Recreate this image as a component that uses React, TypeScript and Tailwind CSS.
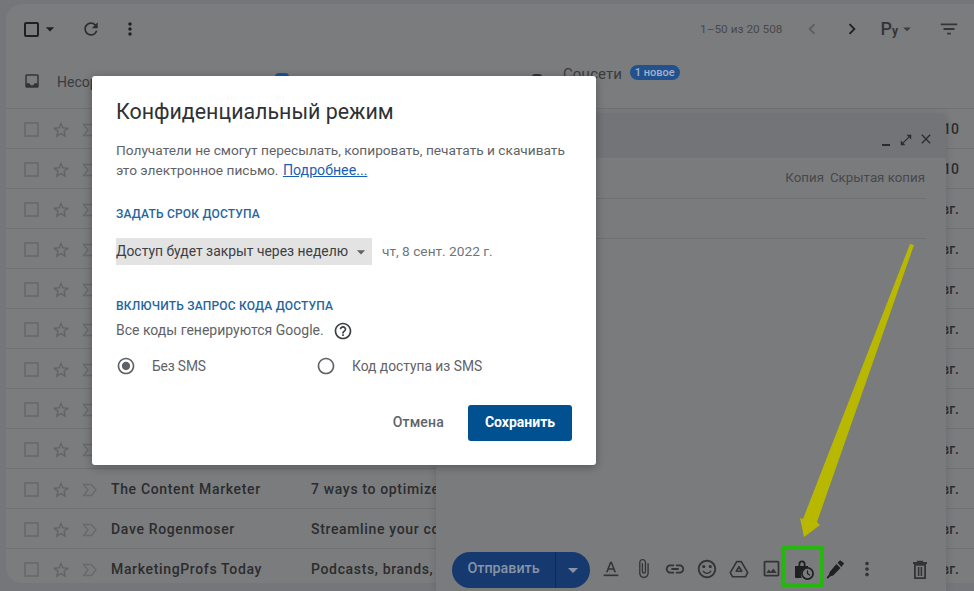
import {
  MdArrowDropDown,
  MdAttachFile,
  MdChevronLeft,
  MdChevronRight,
  MdClose,
  MdFilterList,
  MdHelpOutline,
  MdInbox,
  MdLink,
  MdMoreVert,
  MdOpenInFull,
  MdOutlineImage,
  MdOutlineStarBorder,
  MdRadioButtonChecked,
  MdRadioButtonUnchecked,
  MdRefresh,
  MdSentimentSatisfiedAlt,
} from 'react-icons/md'
import type { ReactNode } from 'react'

const rows = [
  { date: '10' },
  { date: '10' },
  { date: 'вг.' },
  { date: 'вг.' },
  { date: 'вг.' },
  { date: 'вг.' },
  { date: 'вг.' },
  { date: 'вг.' },
  { date: 'вг.' },
  { sender: 'The Content Marketer', subject: '7 ways to optimize your content', date: 'вг.' },
  { sender: 'Dave Rogenmoser', subject: 'Streamline your content', date: 'вг.' },
  { sender: 'MarketingProfs Today', subject: 'Podcasts, brands, and more', date: 'вг.' },
]

function ImportanceIcon() {
  return (
    <svg viewBox="0 0 16 14" className="h-[14px] w-[16px] shrink-0" fill="none" stroke="#68696b" strokeWidth="1.3">
      <path d="M1.5 1.5h8L14 7l-4.500 5.500h-8L6 7z" />
    </svg>
  )
}

function Row({ sender, subject, date }: { sender?: string; subject?: string; date: string }) {
  return (
    <div className="flex h-10 shrink-0 items-center border-t border-[#6f7072] pl-[18px] pr-[15px] pt-[2px] text-[14px] font-medium text-[#2b2c2e]">
      <div className="size-[15px] shrink-0 rounded-[1px] border-2 border-[#6b6c6e]" />
      <MdOutlineStarBorder className="ml-[12px] size-[20px] shrink-0 text-[#626365]" />
      <div className="ml-[11px]"><ImportanceIcon /></div>
      <div className="ml-[13px] w-[200px] shrink-0 truncate tracking-[0.65px]">{sender}</div>
      <div className="w-[125px] shrink-0 overflow-hidden whitespace-nowrap tracking-[0.65px]">{subject}</div>
      <div className="ml-auto shrink-0">{date}</div>
    </div>
  )
}

function LockClock() {
  return (
    <svg viewBox="0 0 24 24" className="size-[24px] text-[#1f2022]" fill="currentColor">
      <path d="M7.500 8V6a3.500 3.500 0 0 1 7 0v2h-1.800V6a1.700 1.700 0 0 0-3.400 0v2z" />
      <path d="M4 8h13v1.600A7 7 0 0 0 10.800 20H5a1 1 0 0 1-1-1z" />
      <circle cx="16.500" cy="15.500" r="5.600" fill="none" stroke="currentColor" strokeWidth="1.700" />
      <path d="M15.900 12.300h1.200v3l2.300 1.400-.6 1-2.900-1.700z" />
    </svg>
  )
}

function DriveIcon() {
  return (
    <svg viewBox="0 0 24 24" className="size-[22px]" fill="none" stroke="#333436" strokeWidth="1.800" strokeLinejoin="round">
      <path d="M9.500 4h5l7 12-2.500 4.500H5L2.500 16z" />
      <path d="M12 9.500l3 5H9z" />
    </svg>
  )
}

function PenIcon() {
  return (
    <svg viewBox="0 0 24 24" className="size-[22px]" fill="#1f2022">
      <path d="M13.500 6.500l4.500 4.500-8 8-3 .8L4 22.500l-1.200-1.200 2.600-2.900.8-3.100z" />
      <path d="M14.800 5.200l2.700-2.700 4.500 3.200-3 4.200z" />
    </svg>
  )
}

function TextColorIcon() {
  return (
    <svg viewBox="0 0 24 24" className="size-[22px]" fill="#333436">
      <path d="M11 4h2l4.500 11.500h-1.900l-1-2.800H9.400l-1 2.800H6.500zm-1 7.100h4L12 5.900z" />
      <rect x="4" y="18" width="16" height="1.800" />
    </svg>
  )
}

function TrashIcon() {
  return (
    <svg viewBox="0 0 24 24" className="size-[24px]" fill="#333436">
      <path d="M5 4h14v2H5zM9 2.800h6V4H9z" />
      <path d="M6 6h12v15H6zm1.800 1.800v11.400h8.400V7.800z" />
      <rect x="9.800" y="9" width="1.600" height="9" />
      <rect x="12.600" y="9" width="1.600" height="9" />
    </svg>
  )
}

function Slot({ children }: { children: ReactNode }) {
  return <div className="flex w-[32px] shrink-0 justify-center">{children}</div>
}

export default function App() {
  return (
    <div className="relative h-[591px] w-[974px] overflow-hidden bg-[#75767a] font-['Roboto',sans-serif]">
      {/* inbox behind the dim layer */}
      <div className="ml-[6px] mt-[4px] flex h-[579px] w-[968px] flex-col overflow-hidden rounded-tl-2xl rounded-bl-2xl bg-[#7b7c7e]">
        <div className="flex h-[50px] shrink-0 items-center pl-[18px] pr-[14px]">
          <div className="size-[15px] rounded-[2px] border-2 border-[#1f2022]" />
          <MdArrowDropDown className="ml-[1px] size-[20px] text-[#1f2022]" />
          <MdRefresh className="ml-[21px] size-[20px] text-[#2b2c2e]" />
          <MdMoreVert className="ml-[19px] size-[20px] text-[#1f2022]" />
          <div className="ml-auto pt-[1px] text-[11.8px] text-[#48494b]">1–50 из 20 508</div>
          <MdChevronLeft className="ml-[19px] size-[22px] text-[#5c5d5f]" />
          <MdChevronRight className="ml-[18px] size-[22px] text-[#1f2022]" />
          <div className="ml-[17px] text-[18px] font-medium leading-none text-[#333436]">
            Р<span className="text-[12px] font-bold">у</span>
          </div>
          <MdArrowDropDown className="size-[18px] text-[#3b3c3e]" />
          <MdFilterList className="ml-[22px] size-[22px] text-[#333436]" />
        </div>
        <div className="flex h-[54px] shrink-0 pl-[17px] text-[14px] text-[#3a3b3d]">
          <MdInbox className="mt-[18px] size-[18px] text-[#333436]" />
          <div className="ml-[16px] mt-[18px] w-[218px]">Несортированные</div>
          <div className="mt-[19px] size-[14px] rounded-sm bg-[#1d4f9c]" />
          <div className="ml-[243px] mt-[20px] h-[6px] w-[10px] rounded-sm bg-[#333436]" />
          <div className="ml-[21px] mt-[9px] text-[15px]">Соцсети</div>
          <div className="ml-[8px] mt-[11px] h-[15px] rounded-full bg-[#22518f] px-[5px] text-[11px] font-medium leading-[15px] text-[#a6b2c6]">1 новое</div>
        </div>
        {rows.map((row, i) => (
          <Row key={i} sender={row.sender} subject={row.subject} date={row.date} />
        ))}
      </div>

      {/* compose window */}
      <div className="absolute left-[436px] top-[115px] flex h-[476px] w-[510px] flex-col bg-[#7a7b7d] shadow-[0_0_8px_rgba(0,0,0,0.15)]">
        <div className="flex h-[43px] shrink-0 items-end justify-end gap-[2px] bg-[#737478] pb-[11px] pr-[12px] text-[#2b2c2e]">
          <div className="mb-[1px] mr-[7px] h-[2px] w-[8px] bg-[#2b2c2e]" />
          <MdOpenInFull className="size-[14px]" />
          <MdClose className="ml-[3px] size-[16px]" />
        </div>
        <div className="mx-[20px] flex h-[41px] shrink-0 items-center justify-end border-b border-[#6f7072] pr-[1px] text-[13.3px] text-[#47484a]">
          <span>Копия</span>
          <span className="ml-[6px]">Скрытая копия</span>
        </div>
        <div className="mx-[20px] h-[40px] shrink-0 border-b border-[#6f7072]" />
        <div className="mt-auto flex h-[41px] items-center pb-[2px] pl-[16px] pr-[10px] text-[#333436]">
          <div className="flex h-[36px] w-[138px] shrink-0 items-center overflow-hidden rounded-full bg-[#163a70] text-[14.3px] font-medium text-[#8893a8]">
            <div className="flex h-full w-[104px] items-center justify-center border-r border-[#0f2b56] pb-[1px]">Отправить</div>
            <MdArrowDropDown className="ml-[5px] size-[24px]" />
          </div>
          <div className="ml-[5px] flex">
            <Slot><TextColorIcon /></Slot>
            <Slot><MdAttachFile className="size-[21px]" /></Slot>
            <Slot><MdLink className="size-[22px]" /></Slot>
            <Slot><MdSentimentSatisfiedAlt className="size-[22px]" /></Slot>
            <Slot><DriveIcon /></Slot>
            <Slot><MdOutlineImage className="size-[21px]" /></Slot>
            <Slot><LockClock /></Slot>
            <Slot><PenIcon /></Slot>
            <Slot><MdMoreVert className="size-[22px]" /></Slot>
          </div>
          <div className="ml-auto"><Slot><TrashIcon /></Slot></div>
        </div>
      </div>

      {/* annotation */}
      <div className="absolute left-[781px] top-[546px] h-[41px] w-[43px] border-[4px] border-[#24b80e]" />
      <svg className="absolute left-[790px] top-[236px]" width="130" height="310" viewBox="0 0 130 310">
        <polygon points="120,8 124,9 27,286 30,289 14,301 10,282 13,283" fill="#b8b800" />
      </svg>

      {/* dialog */}
      <div className="absolute left-[92px] top-[76px] h-[389px] w-[504px] rounded-[3px] bg-white px-[24px] shadow-[0_2px_10px_rgba(0,0,0,0.3)]">
        <h1 className="pt-[21px] text-[21.4px] font-normal leading-[30px] text-[#303134]">Конфиденциальный режим</h1>
        <p className="mt-[13px] text-[13.7px] leading-[20px] text-[#5f6368]">
          Получатели не смогут пересылать, копировать, печатать и скачивать это электронное письмо.{' '}
          <a className="ml-[1px] text-[14.2px] text-[#1a5fb4] underline">Подробнее...</a>
        </p>
        <div className="mt-[26px] text-[12px] font-medium leading-[16px] tracking-[0.2px] text-[#1f669f]">ЗАДАТЬ СРОК ДОСТУПА</div>
        <div className="mt-[16px] flex items-center">
          <div className="flex h-[27px] w-[256px] items-center bg-[#e3e3e3] text-[13.9px] text-[#3c4043]">
            <span className="whitespace-nowrap">Доступ будет закрыт через неделю</span>
            <MdArrowDropDown className="ml-auto mr-[1px] size-[20px] shrink-0 text-[#5f6368]" />
          </div>
          <div className="ml-[10px] text-[13.7px] text-[#70757a]">чт, 8 сент. 2022 г.</div>
        </div>
        <div className="mt-[33px] text-[12px] font-medium leading-[16px] tracking-[0.2px] text-[#1f669f]">ВКЛЮЧИТЬ ЗАПРОС КОДА ДОСТУПА</div>
        <div className="mt-[6px] flex items-center text-[14px] text-[#5f6368]">
          Все коды генерируются Google.
          <MdHelpOutline className="ml-[9px] size-[20px] text-[#3c4043]" />
        </div>
        <div className="mt-[15px] flex items-center text-[13.8px] text-[#5f6368]">
          <MdRadioButtonChecked className="size-[20px] text-[#5f6368]" />
          <span className="ml-[16px] w-[164px] tracking-[-0.15px]">Без SMS</span>
          <MdRadioButtonUnchecked className="size-[20px] text-[#5f6368]" />
          <span className="ml-[16px]">Код доступа из SMS</span>
        </div>
        <div className="mt-[28px] flex items-center justify-end">
          <button className="text-[14px] font-medium tracking-[0.2px] text-[#5f6368]">Отмена</button>
          <button className="ml-[24px] h-[36px] w-[104px] rounded-[3px] bg-[#01508f] text-[14px] font-bold text-white">Сохранить</button>
        </div>
      </div>
    </div>
  )
}
